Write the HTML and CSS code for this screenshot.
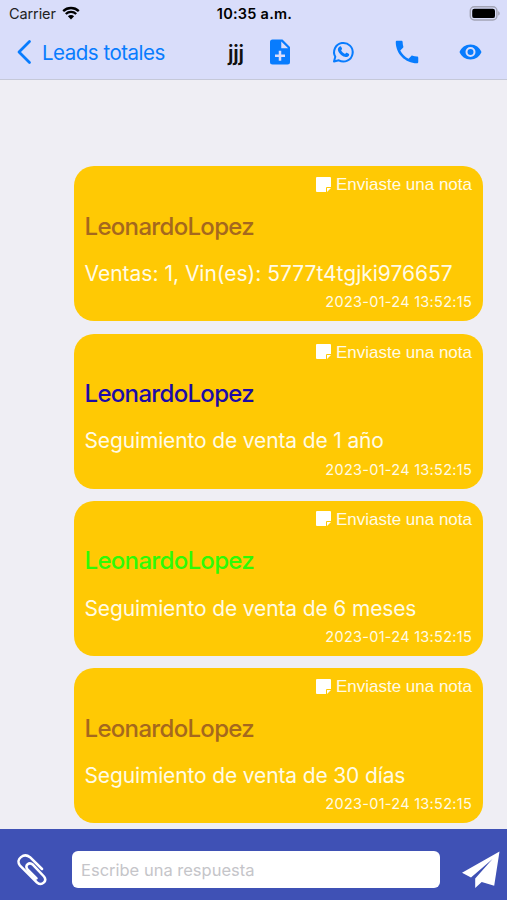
FILE: index.html
```html
<!DOCTYPE html>
<html lang="es">
<head>
    <meta charset="UTF-8">
    <meta name="viewport" content="width=device-width, initial-scale=1.0">
    <title>Leads totales</title>
    <link rel="stylesheet" href="styles.css">
</head>
<body>
    <div class="app">
        <header>
            <div class="status-bar">
                <div class="carrier">
                    <span class="carrier-name">Carrier</span>
                    <svg width="18" height="14" viewBox="0 0 18 14">
                        <path d="M1.2 5.1a11.3 11.3 0 0 1 15.6 0M3.8 8a7.4 7.4 0 0 1 10.4 0" fill="none" stroke="#000" stroke-width="2.3"/>
                        <path d="M5.9 10.3a4.4 4.4 0 0 1 6.2 0L9 13.4z" fill="#000"/>
                    </svg>
                </div>
                <div class="clock">10:35 a.m.</div>
                <div class="battery">
                    <svg width="31" height="15" viewBox="0 0 31 15">
                        <rect x="1.3" y="0.8" width="26.6" height="13.2" rx="4" fill="none" stroke="#a3a4b5" stroke-width="1.4"/>
                        <rect x="3.2" y="2.7" width="22.8" height="9.4" rx="2.2" fill="#000"/>
                        <path d="M29.2 5.2c2 .7 2 3.7 0 4.4z" fill="#a3a4b5"/>
                    </svg>
                </div>
            </div>
            <nav>
                <a class="back" href="#">
                    <svg width="16" height="26" viewBox="0 0 16 26"><path d="M13.5 2.5L3 13l10.5 10.5" fill="none" stroke="currentColor" stroke-width="2.8" stroke-linecap="round" stroke-linejoin="round"/></svg>
                    <span>Leads totales</span>
                </a>
                <div class="title">jjj</div>
                <div class="actions">
                    <svg viewBox="0 0 24 24"><path fill="currentColor" fill-rule="evenodd" d="M14 2H6a2 2 0 0 0-2 2v16a2 2 0 0 0 2 2h12a2 2 0 0 0 2-2V8zM16 16h-3v3h-2v-3H8v-2h3v-3h2v3h3zM13 9V3.5L18.5 9z"/></svg>
                    <svg viewBox="0.7 0 30 30">
                        <path d="M5.7 24.5l1.3-4.7a9.300 9.300 0 1 1 3.500 3.500z" fill="none" stroke="currentColor" stroke-width="2" stroke-linejoin="round"/>
                        <path d="M11.4 9.5c.8-.5 1.3-.3 1.6.5l.7 1.6c.2.5-.1.9-.9 1.7.9 1.7 2.2 2.9 4 3.7.8-1 1.2-1.500 1.700-1.200l1.900.9c.7.4.5 1.3.1 2-.8 1.3-2.500 1.500-4 1.100-3.500-1-6.500-4.200-6.900-6.900-.2-1.400.5-2.600 1.800-3.400z" fill="currentColor"/>
                    </svg>
                    <svg viewBox="0 0 24 24"><path fill="currentColor" d="M6.62 10.79c1.44 2.83 3.76 5.14 6.59 6.59l2.2-2.2c.27-.27.67-.36 1.02-.24 1.12.37 2.33.57 3.57.57.55 0 1 .45 1 1V20c0 .55-.45 1-1 1-9.39 0-17-7.61-17-17 0-.55.45-1 1-1h3.5c.55 0 1 .45 1 1 0 1.25.2 2.45.57 3.57.11.35.03.74-.25 1.02z"/></svg>
                    <svg viewBox="-2.5 -3 30 30"><path fill="currentColor" d="M12 4.5C7 4.5 2.73 7.61 1 12c1.73 4.39 6 7.5 11 7.5s9.27-3.11 11-7.5c-1.73-4.39-6-7.5-11-7.5zM12 17a5 5 0 1 1 0-10 5 5 0 0 1 0 10zm0-8a3 3 0 1 0 0 6 3 3 0 0 0 0-6z"/></svg>
                </div>
            </nav>
        </header>

        <main>
            <div class="message">
                <div class="label">
                    <svg width="15" height="15" viewBox="0 0 15 15"><path d="M1 0h13a1 1 0 0 1 1 1v9h-4a1 1 0 0 0-1 1v4H1a1 1 0 0 1-1-1V1a1 1 0 0 1 1-1zM11 11h4l-4 4z" fill="#fff"/></svg>
                    <span>Enviaste una nota</span>
                </div>
                <div class="author brown">LeonardoLopez</div>
                <div class="text vin">Ventas: 1, Vin(es): 5777t4tgjki976657</div>
                <div class="date">2023-01-24 13:52:15</div>
            </div>
            <div class="message">
                <div class="label">
                    <svg width="15" height="15" viewBox="0 0 15 15"><path d="M1 0h13a1 1 0 0 1 1 1v9h-4a1 1 0 0 0-1 1v4H1a1 1 0 0 1-1-1V1a1 1 0 0 1 1-1zM11 11h4l-4 4z" fill="#fff"/></svg>
                    <span>Enviaste una nota</span>
                </div>
                <div class="author blue">LeonardoLopez</div>
                <div class="text">Seguimiento de venta de 1 año</div>
                <div class="date">2023-01-24 13:52:15</div>
            </div>
            <div class="message">
                <div class="label">
                    <svg width="15" height="15" viewBox="0 0 15 15"><path d="M1 0h13a1 1 0 0 1 1 1v9h-4a1 1 0 0 0-1 1v4H1a1 1 0 0 1-1-1V1a1 1 0 0 1 1-1zM11 11h4l-4 4z" fill="#fff"/></svg>
                    <span>Enviaste una nota</span>
                </div>
                <div class="author green">LeonardoLopez</div>
                <div class="text">Seguimiento de venta de 6 meses</div>
                <div class="date">2023-01-24 13:52:15</div>
            </div>
            <div class="message">
                <div class="label">
                    <svg width="15" height="15" viewBox="0 0 15 15"><path d="M1 0h13a1 1 0 0 1 1 1v9h-4a1 1 0 0 0-1 1v4H1a1 1 0 0 1-1-1V1a1 1 0 0 1 1-1zM11 11h4l-4 4z" fill="#fff"/></svg>
                    <span>Enviaste una nota</span>
                </div>
                <div class="author brown">LeonardoLopez</div>
                <div class="text">Seguimiento de venta de 30 días</div>
                <div class="date">2023-01-24 13:52:15</div>
            </div>
        </main>

        <footer>
            <svg class="clip" width="32" height="34" viewBox="0 0 32 34">
                <path d="M26 16L14 4.2C8-.5-.8 6 3.8 12.3L21 29.500c5 4 10.500-1.500 7-6L17 11.800c-4-3.500-8.500.7-5.500 4.500l9 9" fill="none" stroke="#fff" stroke-width="2.5" stroke-linecap="round" stroke-linejoin="round"/>
            </svg>
            <input type="text" placeholder="Escribe una respuesta">
            <svg class="send" width="38" height="38" viewBox="0 0 38 38"><path d="M37.5.5L0 21.8l9 4.6L30.5 8 13.2 27.5V37l6.5-6 12.500 3.800z" fill="#fff"/></svg>
        </footer>
    </div>
</body>
</html>
```
FILE: styles.css
```css
* {
    box-sizing: border-box;
}
body {
    margin: 0;
    font-family: Inter, "Liberation Sans", sans-serif;
    background-color: #efeef4;
}
.app {
    display: flex;
    flex-direction: column;
    height: 900px;
    overflow: hidden;
}
header {
    height: 80px;
    background-color: #d9ddfa;
    border-bottom: 1px solid #c5c8d8;
}
.status-bar {
    display: grid;
    grid-template-columns: 1fr auto 1fr;
    align-items: center;
    height: 27px;
    padding: 0 7px 0 9px;
}
.carrier {
    display: flex;
    align-items: center;
    gap: 6px;
    font-size: 14.5px;
    letter-spacing: -0.1px;
    color: #222;
}
.carrier svg {
    margin-top: -2px;
}
.clock {
    font-size: 14.5px;
    font-weight: 600;
    letter-spacing: 0.25px;
}
.battery {
    display: flex;
    justify-content: flex-end;
}
nav {
    display: flex;
    align-items: center;
    height: 50px;
    padding: 0 21.5px 0 16px;
    color: #087cfe;
}
.back {
    display: flex;
    align-items: center;
    gap: 10px;
    width: 212px;
    color: inherit;
    text-decoration: none;
    font-size: 20.5px;
    letter-spacing: -0.5px;
}
.title {
    flex: 1;
    padding-top: 2px;
    color: #111;
    font-size: 21px;
    font-weight: 600;
    letter-spacing: -0.3px;
}
.actions {
    display: flex;
    gap: 33.5px;
}
.actions svg {
    width: 30px;
    height: 30px;
}
main {
    flex: 1;
    display: flex;
    flex-direction: column;
    gap: 12.4px;
    padding: 86.2px 24.5px 0 74px;
}
.message {
    height: 155px;
    flex-shrink: 0;
    padding: 9px 10.5px 0;
    border-radius: 20px;
    background-color: #ffc904;
    color: #fffbe6;
}
.label {
    display: flex;
    justify-content: flex-end;
    align-items: center;
    gap: 5px;
    height: 20px;
    font-family: "Liberation Sans", Arial, sans-serif;
    font-size: 17px;
}
.label svg {
    margin-top: -2px;
}
.author {
    margin-top: 16.4px;
    font-size: 24px;
    font-weight: 500;
    line-height: 30px;
    letter-spacing: -0.68px;
}
.brown {
    color: #a5681e;
}
.blue {
    color: #1c0ba8;
}
.green {
    color: #2dfb05;
}
.text {
    margin-top: 18.2px;
    font-size: 21px;
    line-height: 28px;
    letter-spacing: -0.14px;
    white-space: nowrap;
}
.vin {
    letter-spacing: 0;
}
.date {
    margin-top: 4.4px;
    font-size: 14.5px;
    line-height: 20px;
    letter-spacing: 0.28px;
    text-align: right;
}
footer {
    display: flex;
    align-items: center;
    height: 71px;
    padding: 10px 7px 0 16px;
    background-color: #3f51b5;
}
.clip {
    flex-shrink: 0;
    margin-right: 24px;
}
input {
    width: 369px;
    height: 37px;
    padding: 0 9px;
    border: none;
    border-radius: 6px;
    background-color: #fff;
    font-family: inherit;
    font-size: 16.5px;
}
input::placeholder {
    color: #c5c5c9;
}
.send {
    flex-shrink: 0;
    margin-left: 22px;
}
```
